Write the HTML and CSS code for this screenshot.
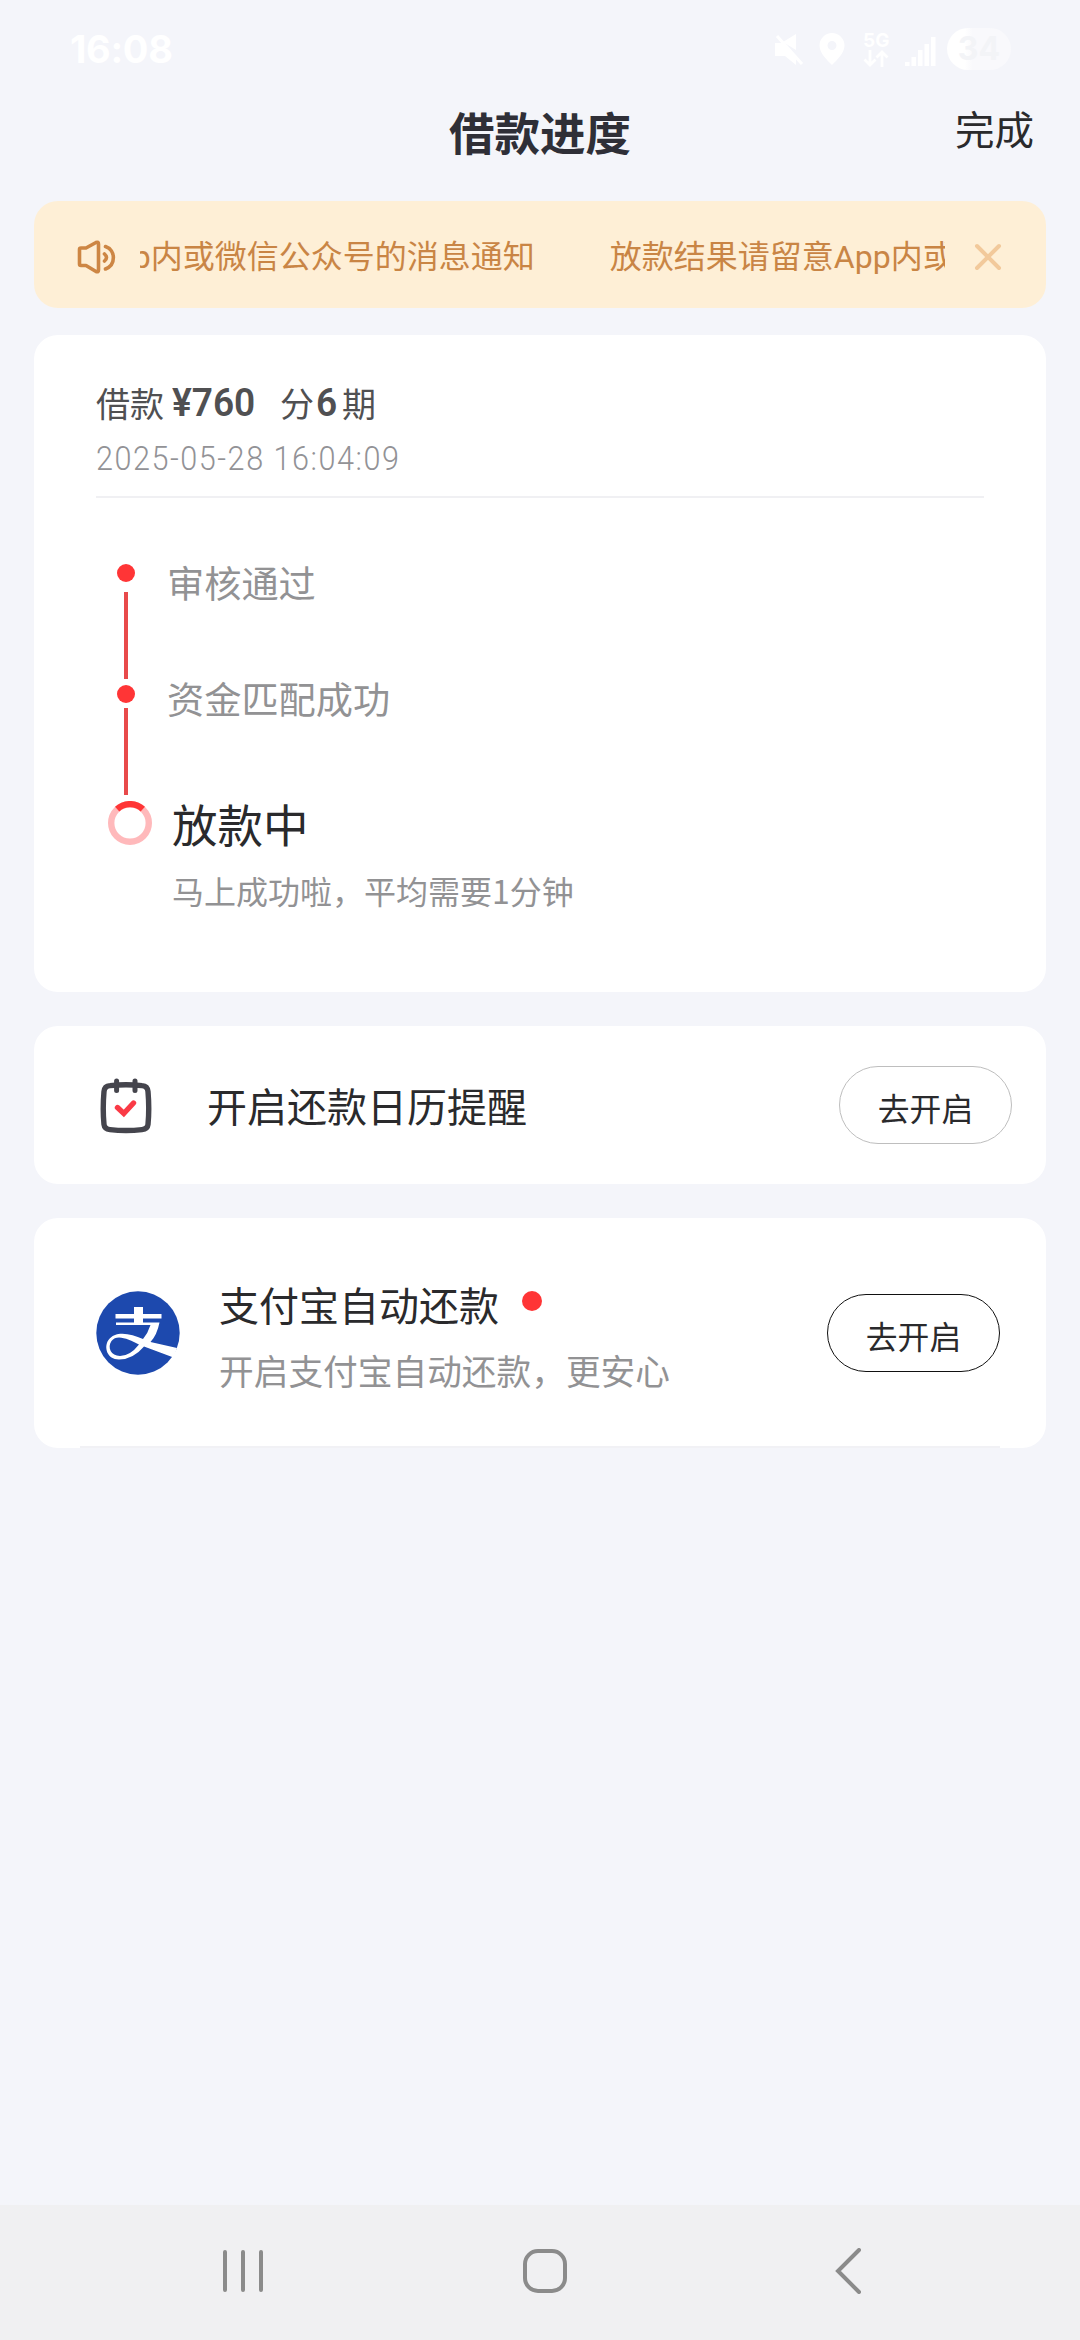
FILE: index.html
```html
<!DOCTYPE html>
<html lang="zh-CN">
<head>
<meta charset="utf-8">
<title>借款进度</title>
<link rel="stylesheet" href="styles.css">
</head>
<body>
<div class="screen">
  <div class="statusbar">
    <span class="clock">16:08</span>
    <div class="status-icons">
      <svg class="ic-mute" width="32" height="32" viewBox="0 0 32 32" fill="#fff"><path d="M10 9L23 1V17zM2 10h7l14 13v9l-11-9H2z"/><path d="M4 3L29 31" stroke="#fff" stroke-width="3"/></svg>
      <svg class="ic-pin" width="26" height="32" viewBox="0 0 26 32"><path fill="#fff" fill-rule="evenodd" d="M13 0a12.500 12.500 0 0 1 12.500 12.500C25.500 20 18 27 13 32 8 27 .5 20 .5 12.500A12.500 12.500 0 0 1 13 0zm0 8a4.500 4.500 0 1 0 0 9 4.500 4.500 0 0 0 0-9z"/></svg>
      <div class="net"><span>5G</span><svg width="26" height="17" viewBox="0 0 26 17" fill="none" stroke="#fff" stroke-width="2.800"><path d="M7 0v15M1.500 9.500L7 15l5.500-5.500M19 17V2M13.500 7.500L19 2l5.500 5.500"/></svg></div>
      <svg class="ic-signal" width="32" height="32" viewBox="0 0 32 32" fill="#fff"><path d="M0 28h4.500v4H0zM6.500 23h4.500v9H6.500zM13 16h4.500v16H13zM19.500 10h4.500v22h-4.500zM26 3h4.500v29H26z"/></svg>
      <span class="battery">34</span>
    </div>
  </div>

  <header class="titlebar">
    <h1>借款进度</h1>
    <a class="done">完成</a>
  </header>

  <main class="content">
    <section class="notice">
      <svg class="speaker" width="42" height="36" viewBox="0 0 42 36" fill="none" stroke="#cd8644" stroke-width="3.600" stroke-linejoin="round" stroke-linecap="round"><path d="M3.500 10.500Q3.500 9 5 9H10L20 3.500Q22.500 2.500 22.500 5V31Q22.500 33.500 20 32.500L10 26.500H5Q3.500 26.500 3.500 25z"/><path d="M29.500 7.500C40 11 40 26 29.500 30M28.500 15Q32.500 18.500 28.500 22"/></svg>
      <div class="marquee"><span class="tail">放款结果请留意App内或微信公众号的消息通知</span><span>放款结果请留意App内或微信公众号的消息通知</span></div>
      <svg class="close" width="28" height="28" viewBox="0 0 28 28" stroke="#f2c99b" stroke-width="4" stroke-linecap="round"><path d="M3 3L25 25M25 3L3 25"/></svg>
    </section>

    <section class="card progress">
      <div class="summary"><span>借款</span><b class="num amount">¥760</b><span>分</span><b class="num terms">6</b><span>期</span></div>
      <div class="time"><span>2025-05-28 16:04:09</span></div>
      <div class="steps">
        <div class="rail">
          <i class="dot"></i><i class="line line-a"></i><i class="dot"></i><i class="line line-b"></i>
          <svg class="ring" width="44" height="44" viewBox="0 0 44 44" fill="none" stroke-width="6.400"><circle cx="22" cy="22" r="18.800" stroke="#ffb9bb"/><path d="M9.200 8.200A18.800 18.800 0 0 1 34.800 8.200" stroke="#ff3536"/></svg>
        </div>
        <div class="labels">
          <p class="step step-a">审核通过</p>
          <p class="step step-b">资金匹配成功</p>
          <p class="current">放款中</p>
          <p class="hint">马上成功啦，平均需要1分钟</p>
        </div>
      </div>
    </section>

    <section class="card calendar">
      <svg class="cal-icon" width="54" height="60" viewBox="0 0 54 60" fill="none" stroke-linecap="round"><path d="M11 9.600Q27 8 43 9.600Q48.500 10 49 15.500Q50.500 33 49 48.500Q48.500 53 43 53.600Q27 55.500 11 53.600Q5.500 53 5 48.500Q3.500 33 5 15.500Q5.500 10 11 9.600z" stroke="#45454d" stroke-width="5.400"/><path d="M17.600 5v9.500M36 5v9.500" stroke="#45454d" stroke-width="5"/><path d="M18.500 31.500L24.800 37.500L34.500 27" stroke="#fa3a46" stroke-width="5.400"/></svg>
      <span class="row-title">开启还款日历提醒</span>
      <button class="pill">去开启</button>
    </section>

    <section class="card alipay">
      <svg class="logo" width="84" height="84" viewBox="0 0 84 84"><circle cx="42" cy="42" r="41.700" fill="#1d49ae"/><path d="M38 16h9v7h18.500v4.500H47v4h16.500Q61 44 54.500 51L81 57L77.500 66.500L48 55.500Q37 68.500 23 68.500C11 68.500 7.500 56 12.500 49C19 39.500 34 42 47 48Q52 42 54.500 34H20v-2.500h18v-4H19.500V23H38zM43 53.500C33 48.500 21 42.500 15.500 50C11 56.500 15 65 24 65Q34 65 43 53.500z" fill="#fff" fill-rule="evenodd"/></svg>
      <div class="ali-text">
        <div class="ali-title">支付宝自动还款<i class="badge"></i></div>
        <div class="ali-sub">开启支付宝自动还款，更安心</div>
      </div>
      <button class="pill dark">去开启</button>
    </section>
  </main>

  <nav class="navbar">
    <svg width="42" height="46" viewBox="0 0 42 46" stroke="#8b8b8b" stroke-width="4" stroke-linecap="round"><path d="M3 4v38M21 4v38M39 4v38"/></svg>
    <svg width="44" height="46" viewBox="0 0 44 46" fill="none" stroke="#8b8b8b" stroke-width="4"><rect x="2" y="3" width="40" height="40" rx="13"/></svg>
    <svg width="28" height="46" viewBox="0 0 28 46" fill="none" stroke="#8b8b8b" stroke-width="4" stroke-linecap="round"><path d="M25 2L4 23L25 44"/></svg>
  </nav>
</div>
</body>
</html>
```
FILE: styles.css
```css
* { box-sizing: border-box; margin: 0; padding: 0; }
body { width: 1080px; background: #f4f5fa; font-family: "Noto Sans CJK SC", sans-serif; color: #2a2a2c; }
i { font-style: normal; display: block; }
svg { display: block; flex: none; }
.screen { height: 2340px; display: flex; flex-direction: column; overflow: hidden; }

.statusbar { height: 98px; display: flex; justify-content: space-between; padding: 0 69px 0 70px; align-items: center; color: #fff; }
.clock { font: 700 38px/40px Inter, sans-serif; letter-spacing: -.3px; }
.status-icons { display: flex; align-items: center; }
.ic-pin { margin-left: 14px; }
.net { width: 26px; margin-left: 18px; font: 700 19px/18px Inter, sans-serif; }
.ic-signal { margin-left: 16px; margin-top: 2px; }
.battery { width: 64px; height: 42px; margin-left: 10px; border-radius: 21px; background: linear-gradient(90deg, #fff 28%, #f9f9fc 40%); font: 700 32px/42px Inter, sans-serif; color: #f3f4f7; text-align: center; }

.titlebar { height: 103px; display: grid; grid-template-columns: 1fr auto 1fr; padding: 0 46px 0; align-items: start; }
.titlebar h1 { grid-column: 2; font-size: 45.500px; line-height: 66px; font-weight: 700; color: #2f2f37; }
.done { justify-self: end; font-size: 39.500px; line-height: 60px; }

.content { flex: 1; padding: 0 34px; }
.notice { height: 107px; border-radius: 24px; background: #feefd6; display: flex; align-items: center; padding: 5px 44px 0 42px; color: #c98545; }
.marquee { width: 805px; margin-left: 22px; overflow: hidden; display: flex; gap: 75px; font-family: Roboto, "Noto Sans CJK SC", sans-serif; font-size: 32px; line-height: 48px; white-space: nowrap; }
.marquee span { flex: none; }
.tail { margin-left: -270px; }
.close { margin-left: 29px; }

.card { background: #fff; border-radius: 24px; }
.progress { margin-top: 27px; height: 657px; padding: 43px 62px 0; }
.summary { height: 50px; display: flex; align-items: center; font-size: 34px; line-height: 50px; color: #505052; }
.num { font-family: Roboto, sans-serif; font-size: 39px; font-weight: 600; transform-origin: left; }
.amount { width: 108px; margin-left: 8px; transform: scaleX(.95); }
.terms { width: 26px; margin-left: 2px; transform: scaleX(.95); }
.time { height: 70px; border-bottom: 2px solid #f0f0f3; color: #929296; font: 300 34px/60px Roboto, sans-serif; }
.time span { display: inline-block; transform: scaleX(.9); transform-origin: left; letter-spacing: 1.700px; }
.steps { display: flex; padding-top: 54px; }
.rail { width: 71px; padding-top: 12px; }
.dot { width: 18px; height: 18px; border-radius: 50%; background: #ff3536; margin-left: 21px; }
.line { width: 4px; height: 87px; margin-left: 28px; background: #e84a4b; }
.line-a { margin-top: 10px; margin-bottom: 6px; }
.line-b { margin-top: 5px; margin-bottom: 6px; }
.ring { margin-left: 12px; }
.step { font-size: 37.200px; line-height: 56px; color: #929294; }
.step-a { margin-top: 2px; }
.step-b { margin-top: 60px; }
.current { margin: 63px 0 0 5px; font-size: 45.500px; line-height: 68px; }
.hint { margin: 9px 0 0 5px; font-size: 32px; line-height: 48px; color: #929294; }

.calendar { margin-top: 34px; height: 158px; padding: 0 34px 0 65px; display: flex; align-items: center; }
.cal-icon { margin-top: 2px; }
.row-title { margin-left: 54px; font-size: 40px; line-height: 60px; flex: 1; margin-top: -1px; }
.pill { width: 173px; height: 78px; border: 1px solid #bebebe; border-radius: 39px; background: #fff; font: 400 31.800px/48px "Noto Sans CJK SC", sans-serif; color: #2a2a2c; padding-top: 3px; }
.dark { border-color: #111; }

.alipay { margin-top: 34px; height: 230px; padding: 0 46px 0 62px; display: flex; align-items: center; position: relative; }
.alipay::after { content: ""; position: absolute; left: 46px; right: 46px; bottom: 0; height: 2px; background: #f1f1f5; }
.ali-text { margin-left: 39px; flex: 1; margin-top: 3px; }
.ali-title { display: flex; align-items: center; font-size: 40px; line-height: 60px; }
.badge { width: 20px; height: 20px; border-radius: 50%; background: #ff3536; margin: -5px 0 0 23px; }
.ali-sub { margin-top: 10px; font-size: 34.700px; line-height: 52px; color: #929294; }

.navbar { height: 135px; background: #f0f0f2; display: flex; padding: 43px 0 0 222px; }
.navbar svg:nth-child(2) { margin-left: 259px; }
.navbar svg:nth-child(3) { margin-left: 267px; }
```
